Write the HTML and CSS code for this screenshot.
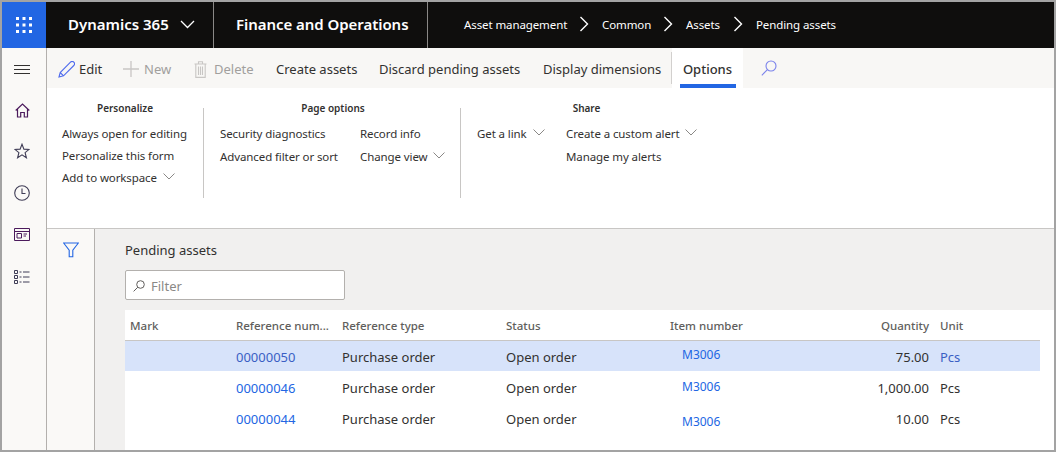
FILE: index.html
```html
<!DOCTYPE html>
<html>
<head>
    <link rel="stylesheet" href="styles.css">
</head>
<body>
    <div class="navbar">
        <div class="waffle">
            <svg width="16" height="16" viewBox="0 0 16 16" fill="#fff">
                <rect x="0" y="0" width="3" height="3"/><rect x="6.5" y="0" width="3" height="3"/><rect x="13" y="0" width="3" height="3"/>
                <rect x="0" y="6.5" width="3" height="3"/><rect x="6.5" y="6.5" width="3" height="3"/><rect x="13" y="6.5" width="3" height="3"/>
                <rect x="0" y="13" width="3" height="3"/><rect x="6.5" y="13" width="3" height="3"/><rect x="13" y="13" width="3" height="3"/>
            </svg>
        </div>
        <div class="brand">
            <span>Dynamics 365</span>
            <svg width="15" height="9" viewBox="0 0 15 9" fill="none" stroke="#fff" stroke-width="1.3"><path d="M1 1l6.5 6.5L14 1"/></svg>
        </div>
        <div class="app">Finance and Operations</div>
        <div class="crumbs">
            <span class="crumb-1">Asset management</span>
            <svg class="crumb-arrow" width="10" height="16" viewBox="0 0 10 16" fill="none" stroke="#fff" stroke-width="1.4"><path d="M1.5 1l7 7-7 7"/></svg>
            <span class="crumb-2">Common</span>
            <svg class="crumb-arrow" width="10" height="16" viewBox="0 0 10 16" fill="none" stroke="#fff" stroke-width="1.4"><path d="M1.5 1l7 7-7 7"/></svg>
            <span class="crumb-3">Assets</span>
            <svg class="crumb-arrow" width="10" height="16" viewBox="0 0 10 16" fill="none" stroke="#fff" stroke-width="1.4"><path d="M1.5 1l7 7-7 7"/></svg>
            <span>Pending assets</span>
        </div>
    </div>

    <div class="main">
        <div class="sidebar">
            <svg width="16" height="9" viewBox="0 0 16 9" stroke="#323130"><path d="M0 .5h16M0 4.500h16M0 8.500h16"/></svg>
            <svg class="side-home" width="15" height="15" viewBox="0 0 15 15" fill="none" stroke="#4b1a5c" stroke-width="1.2"><path d="M.7 7.5L7.5 1l6.8 6.5M2.5 6v8h3.2v-4.500h3.600V14h3.200V6"/></svg>
            <svg class="side-star" width="16" height="16" viewBox="0 0 16 16" fill="none" stroke="#3f3d56" stroke-width="1.100"><path d="M8 1.200l1.900 4.900 5.200.3-4 3.300 1.300 5.100L8 11.900l-4.400 2.900 1.300-5.100-4-3.300 5.200-.3z"/></svg>
            <svg class="side-clock" width="16" height="16" viewBox="0 0 16 16" fill="none" stroke="#3f3d56" stroke-width="1.100"><circle cx="8" cy="8" r="7.300"/><path d="M8 3.500v5h3.500"/></svg>
            <svg class="side-card" width="16" height="13" viewBox="0 0 16 13" fill="none" stroke="#4b1a5c"><path d="M.5.500h15v12H.5zM.5 3.500h15M3 5.500h4.500v4.500H3zM9.500 6h3.500M9.500 8h2.500"/></svg>
            <svg class="side-list" width="16" height="14" viewBox="0 0 16 14" fill="none" stroke="#3f3d56"><path d="M.5.500h3v3h-3zM.5 5.500h3v3h-3zM.5 10.500h3v3h-3zM5.500 2h2M9 2h6.500M5.500 7h2M9 7h6.500M5.500 12h2M9 12h6.500"/></svg>
        </div>

        <div class="workspace">
            <div class="actionbar">
                <div class="action action-edit">
                    <svg width="17" height="17" viewBox="0 0 17 17" fill="none" stroke="#4f6bed" stroke-width="1.100"><path d="M1 16l1.200-4.500L12.500 1.200a1.800 1.800 0 0 1 3.300 3.300L5.500 14.800zM2.200 11.500l3.300 3.300"/></svg>
                    <span>Edit</span>
                </div>
                <div class="action action-new disabled">
                    <svg width="16" height="16" viewBox="0 0 16 16" stroke="#c8c6c4" stroke-width="1.300"><path d="M8 0v16M0 8h16"/></svg>
                    <span>New</span>
                </div>
                <div class="action action-delete disabled">
                    <svg width="13" height="17" viewBox="0 0 13 17" fill="none" stroke="#c8c6c4" stroke-width="1.100"><path d="M.5 3h12M4.500 3V.8h4V3M1.800 3v13.400h9.400V3M4.500 5.500v8.500M6.500 5.500v8.500M8.500 5.500v8.500"/></svg>
                    <span>Delete</span>
                </div>
                <div class="action action-create">Create assets</div>
                <div class="action action-discard">Discard pending assets</div>
                <div class="action action-display">Display dimensions</div>
                <div class="tab">Options</div>
                <svg class="action-search" width="16" height="16" viewBox="0 0 16 16" fill="none" stroke="#7b83eb" stroke-width="1.100"><circle cx="10" cy="6" r="5"/><path d="M6.400 9.600L.8 15.300"/></svg>
            </div>

            <div class="ribbon">
                <div class="group group-personalize">
                    <div class="group-title">Personalize</div>
                    <div class="group-col">
                        <div class="link">Always open for editing</div>
                        <div class="link">Personalize this form</div>
                        <div class="link">Add to workspace <svg class="chev" width="12" height="7" viewBox="0 0 12 7" fill="none" stroke="#8a8886"><path d="M.5.500L6 6l5.500-5.500"/></svg></div>
                    </div>
                </div>
                <div class="group group-page">
                    <div class="group-title">Page options</div>
                    <div class="group-cols">
                        <div class="group-col col-diag">
                            <div class="link">Security diagnostics</div>
                            <div class="link">Advanced filter or sort</div>
                        </div>
                        <div class="group-col">
                            <div class="link">Record info</div>
                            <div class="link">Change view <svg class="chev" width="12" height="7" viewBox="0 0 12 7" fill="none" stroke="#8a8886"><path d="M.5.500L6 6l5.500-5.500"/></svg></div>
                        </div>
                    </div>
                </div>
                <div class="group group-share">
                    <div class="group-title">Share</div>
                    <div class="group-cols">
                        <div class="group-col col-link">
                            <div class="link">Get a link <svg class="chev" width="12" height="7" viewBox="0 0 12 7" fill="none" stroke="#8a8886"><path d="M.5.500L6 6l5.500-5.500"/></svg></div>
                        </div>
                        <div class="group-col">
                            <div class="link">Create a custom alert <svg class="chev" width="12" height="7" viewBox="0 0 12 7" fill="none" stroke="#8a8886"><path d="M.5.500L6 6l5.500-5.500"/></svg></div>
                            <div class="link">Manage my alerts</div>
                        </div>
                    </div>
                </div>
            </div>

            <div class="content">
                <div class="filter-rail">
                    <svg width="16" height="16" viewBox="0 0 16 16" fill="none" stroke="#2266e3" stroke-width="1.100"><path d="M.6 1h14.800L9.800 8.200v6.500H6.200V8.200z"/></svg>
                </div>
                <div class="page">
                    <div class="page-head">
                        <div class="page-title">Pending assets</div>
                        <div class="filter-box">
                            <svg width="12" height="12" viewBox="0 0 12 12" fill="none" stroke="#605e5c"><circle cx="7.500" cy="4.500" r="3.800"/><path d="M4.800 7.200L.6 11.400"/></svg>
                            <span>Filter</span>
                        </div>
                    </div>
                    <div class="grid">
                        <div class="row head">
                            <div>Mark</div><div>Reference num...</div><div>Reference type</div><div>Status</div><div>Item number</div><div class="num">Quantity</div><div>Unit</div>
                        </div>
                        <div class="row selected">
                            <div></div><div class="blue">00000050</div><div>Purchase order</div><div>Open order</div><div class="blue item item-up">M3006</div><div class="num">75.00</div><div class="blue">Pcs</div>
                        </div>
                        <div class="row">
                            <div></div><div class="blue">00000046</div><div>Purchase order</div><div>Open order</div><div class="blue item item-up2">M3006</div><div class="num">1,000.00</div><div>Pcs</div>
                        </div>
                        <div class="row">
                            <div></div><div class="blue">00000044</div><div>Purchase order</div><div>Open order</div><div class="blue item item-down">M3006</div><div class="num">10.00</div><div>Pcs</div>
                        </div>
                    </div>
                </div>
            </div>
        </div>
    </div>
</body>
</html>
```

FILE: styles.css
```css
* {
    box-sizing: border-box;
}
html, body {
    margin: 0;
    height: 100%;
}
body {
    display: flex;
    flex-direction: column;
    border: 2px solid #a3a3a3;
    font-family: 'Noto Sans', sans-serif;
    font-size: 13px;
    color: #323130;
    background-color: white;
    overflow: hidden;
}

/* top bar */
.navbar {
    display: flex;
    align-items: center;
    height: 46px;
    flex: none;
    background-color: #0f0e0d;
    color: white;
}
.waffle {
    display: flex;
    align-items: center;
    justify-content: center;
    width: 44px;
    height: 100%;
    background-color: #2266e3;
}
.brand {
    display: flex;
    align-items: center;
    gap: 11px;
    width: 168px;
    height: 100%;
    padding: 0 0 2px 22px;
    border-right: 1px solid #8a8886;
    font-size: 15px;
    font-weight: 600;
}
.app {
    display: flex;
    align-items: center;
    width: 214px;
    height: 100%;
    padding: 0 0 2px 22px;
    border-right: 1px solid #8a8886;
    font-size: 15px;
    font-weight: 600;
    letter-spacing: -0.05px;
    white-space: nowrap;
}
.crumbs {
    display: flex;
    align-items: center;
    height: 100%;
    padding: 0 0 2px 36px;
    font-size: 11.500px;
    letter-spacing: -0.1px;
    white-space: nowrap;
}
.crumbs span {
    display: block;
}
.crumb-1 { width: 115px; }
.crumb-2 { width: 61px; }
.crumb-3 { width: 47px; }
.crumb-arrow {
    margin-right: 13px;
}

.main {
    display: flex;
    flex: 1;
    min-height: 0;
}

/* left icons */
.sidebar {
    display: flex;
    flex-direction: column;
    align-items: center;
    width: 45px;
    flex: none;
    padding: 17px 4px 0 0;
    background-color: #faf9f7;
    border-right: 1px solid #b3b0ad;
}
.side-home { margin-top: 29px; }
.side-star { margin-top: 25px; }
.side-clock { margin-top: 26px; }
.side-card { margin-top: 27px; }
.side-list { margin-top: 29px; }

.workspace {
    display: flex;
    flex-direction: column;
    flex: 1;
    min-width: 0;
}

/* action bar */
.actionbar {
    display: flex;
    align-items: center;
    height: 40px;
    flex: none;
    background-color: #f8f7f5;
    white-space: nowrap;
}
.action {
    display: flex;
    align-items: center;
    padding-top: 2px;
}
.action.disabled {
    color: #a19f9d;
}
.action-edit {
    gap: 4px;
    width: 76px;
    padding-left: 11px;
}
.action-new {
    gap: 5px;
    width: 71px;
}
.action-delete {
    gap: 7px;
    width: 82px;
}
.action-create { width: 103px; }
.action-discard { width: 164px; }
.action-display { width: 129px; border-right: 1px solid #d2d0ce; height: 32px; }
.tab {
    display: flex;
    align-items: center;
    justify-content: center;
    width: 71px;
    height: 40px;
    padding: 2px 6px 0;
    background-color: white;
    font-weight: 500;
    background-image: linear-gradient(#2266e3, #2266e3);
    background-size: 56px 4px;
    background-position: 8px 36px;
    background-repeat: no-repeat;
}
.action-search {
    margin-left: 18px;
}

/* options ribbon */
.ribbon {
    display: flex;
    height: 141px;
    flex: none;
    padding-top: 20px;
    border-bottom: 1px solid #c8c6c4;
    font-size: 11.500px;
    letter-spacing: -0.1px;
}
.group {
    height: 90px;
    padding: 0 0 0 16px;
    border-right: 1px solid #c8c6c4;
}
.group:last-child {
    border-right: none;
}
.group-personalize {
    width: 157px;
    padding-left: 15px;
}
.group-page {
    width: 257px;
}
.group-title {
    height: 24px;
    margin-top: -7px;
    font-size: 10px;
    font-weight: 600;
    line-height: 14px;
    text-align: center;
    letter-spacing: 0;
}
.group-personalize .group-title { width: 126px; }
.group-page .group-title { width: 226px; }
.group-share .group-title { width: 219px; }
.group-cols {
    display: flex;
}
.group-col {
    display: flex;
    flex-direction: column;
    gap: 5px;
}
.group-cols .group-col {
    gap: 6px;
}
.col-diag { width: 140px; }
.col-link { width: 89px; }
.link {
    line-height: 17px;
    white-space: nowrap;
}
.chev {
    margin-left: 3px;
    vertical-align: 2px;
}

/* lower part */
.content {
    display: flex;
    flex: 1;
    min-height: 0;
}
.filter-rail {
    width: 48px;
    flex: none;
    padding: 13px 0 0 16px;
    background-color: #faf9f7;
    border-right: 1px solid #b3b0ad;
}
.page {
    flex: 1;
    display: flex;
    flex-direction: column;
    background-color: #f1f0ef;
}
.page-head {
    height: 81px;
    flex: none;
    padding: 12px 0 0 30px;
}
.page-title {
    height: 29px;
    font-size: 13px;
    line-height: 18px;
}
.filter-box {
    display: flex;
    align-items: center;
    gap: 6px;
    width: 220px;
    height: 30px;
    padding: 1px 0 0 7px;
    background-color: white;
    border: 1px solid #b3b0ad;
    border-radius: 2px;
    color: #8a8886;
}
.grid {
    flex: 1;
    margin-left: 30px;
    background-color: white;
    font-size: 13px;
}
.row {
    display: grid;
    grid-template-columns: 106px 106px 164px 164px 130px 129px 1fr;
    align-items: center;
    width: 915px;
    height: 31px;
    padding-left: 5px;
}
.row.head {
    height: 31px;
    border-bottom: 1px solid #c8c6c4;
    font-size: 11.500px;
    color: #605e5c;
    font-weight: 500;
}
.row.selected {
    height: 30px;
    margin-bottom: 1px;
    padding-top: 2px;
    background-color: #d7e3fa;
}
.num {
    text-align: right;
}
.row > div:last-child {
    padding-left: 11px;
}
.blue {
    color: #2266e3;
}
.selected .blue {
    color: #3a5fc4;
}
.selected .item {
    color: #2266e3;
}
.item {
    padding-left: 12px;
    font-size: 12px;
}
.item-up { padding-bottom: 6px; }
.item-up2 { padding-bottom: 2px; }
.item-down { padding-top: 6px; }
```
